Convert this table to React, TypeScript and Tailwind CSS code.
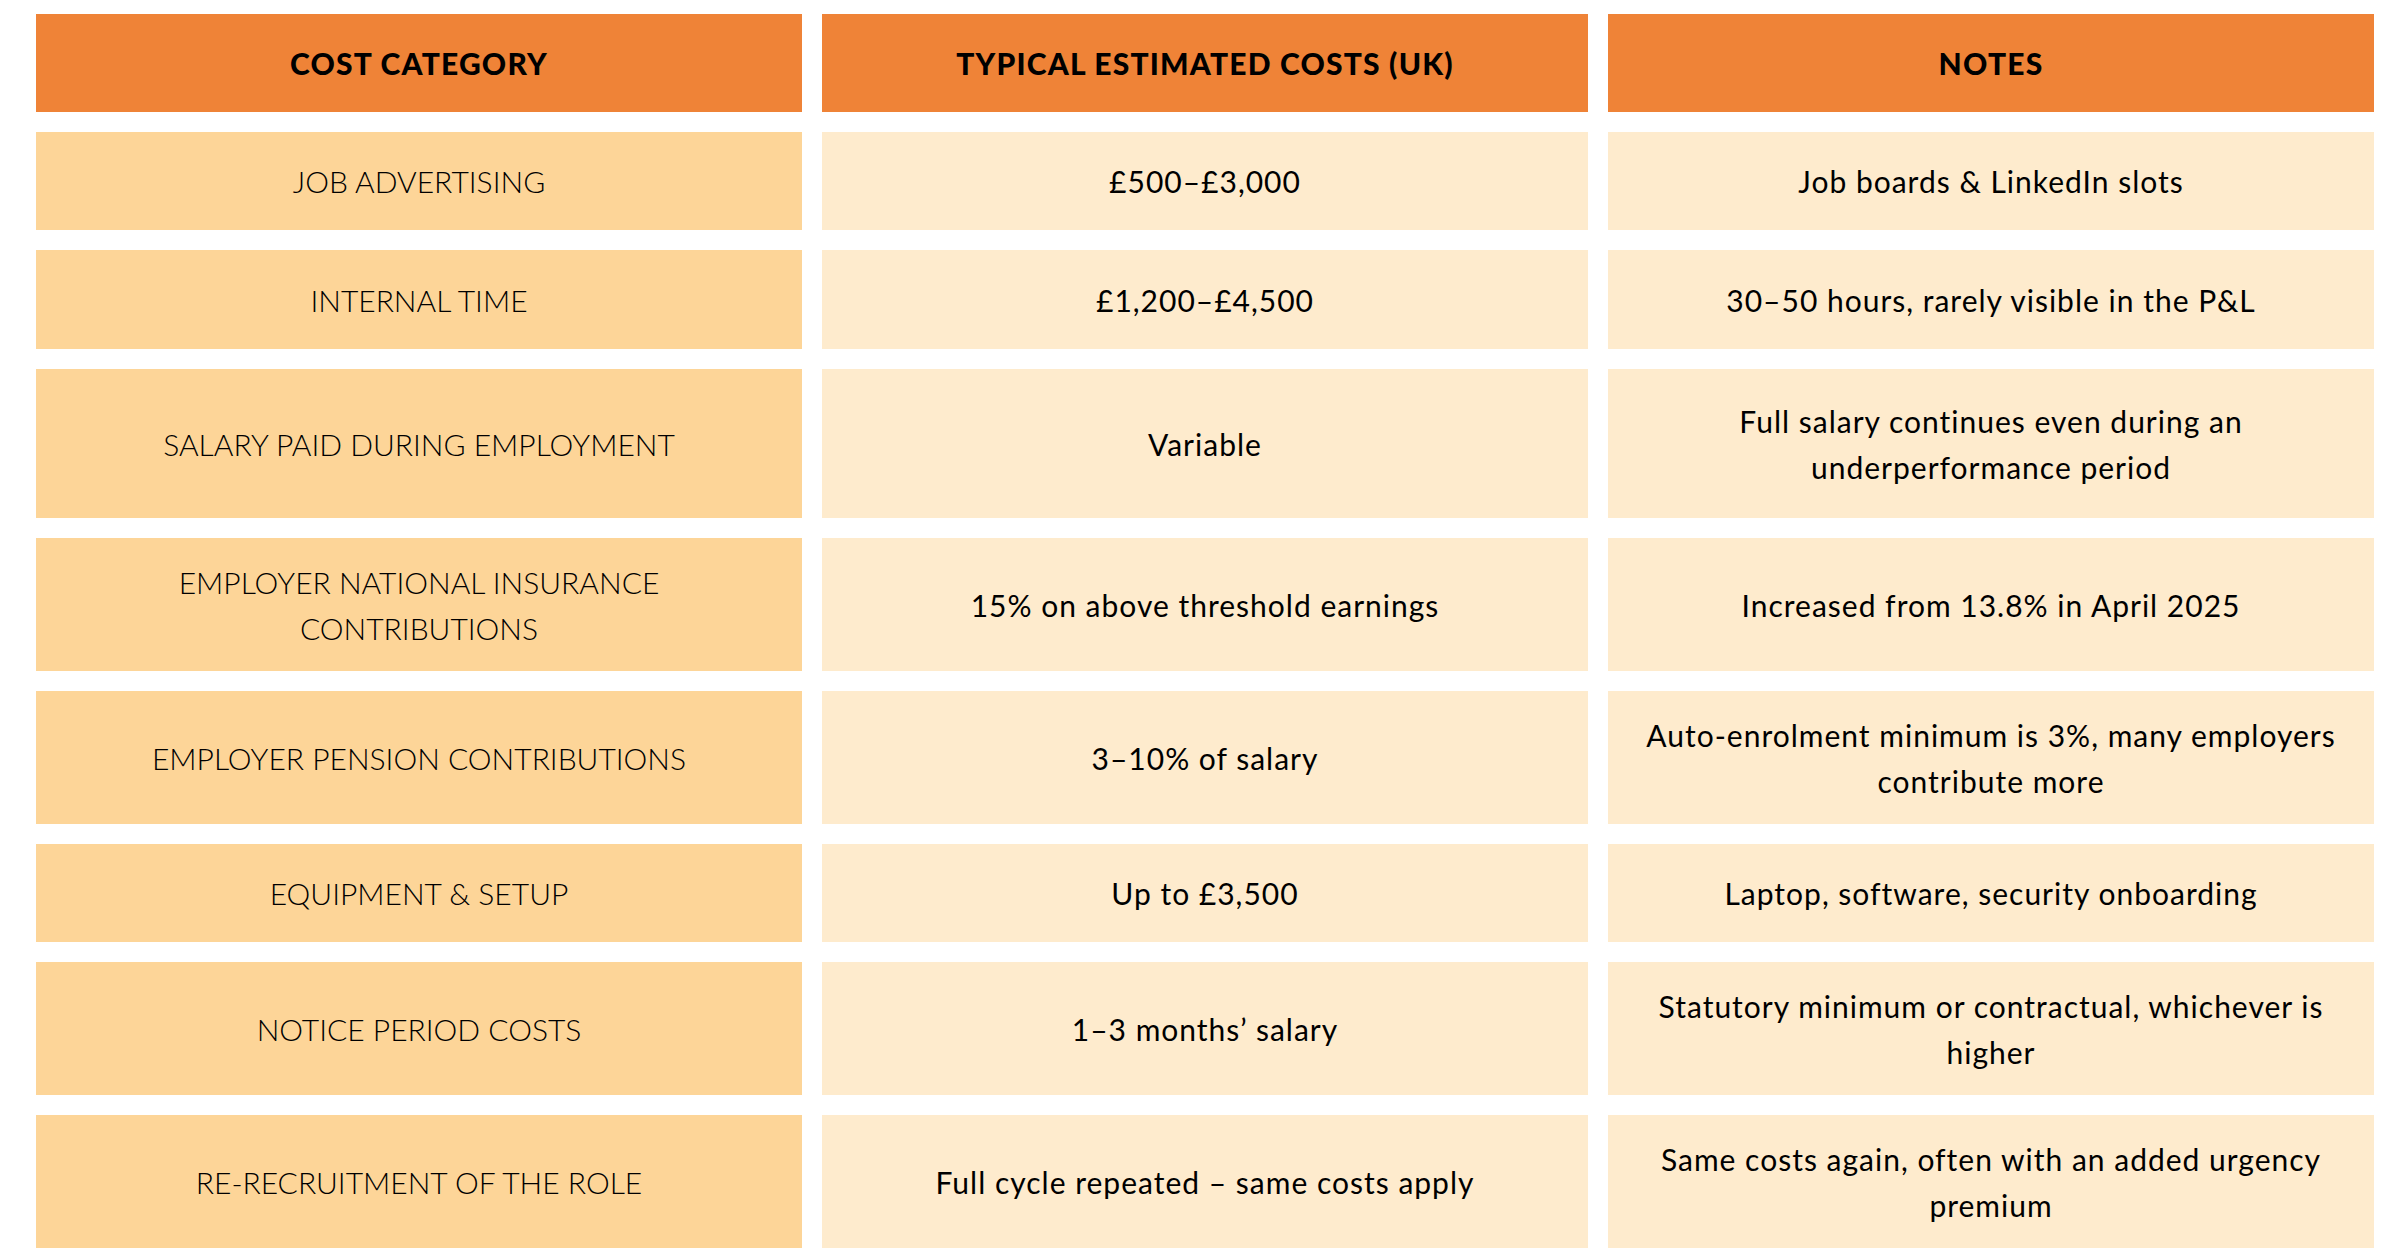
const rows: { category: string[]; cost: string; notes: string[] }[] = [
  { category: ["JOB ADVERTISING"], cost: "£500–£3,000", notes: ["Job boards & LinkedIn slots"] },
  { category: ["INTERNAL TIME"], cost: "£1,200–£4,500", notes: ["30–50 hours, rarely visible in the P&L"] },
  { category: ["SALARY PAID DURING EMPLOYMENT"], cost: "Variable", notes: ["Full salary continues even during an", "underperformance period"] },
  { category: ["EMPLOYER NATIONAL INSURANCE", "CONTRIBUTIONS"], cost: "15% on above threshold earnings", notes: ["Increased from 13.8% in April 2025"] },
  { category: ["EMPLOYER PENSION CONTRIBUTIONS"], cost: "3–10% of salary", notes: ["Auto-enrolment minimum is 3%, many employers", "contribute more"] },
  { category: ["EQUIPMENT & SETUP"], cost: "Up to £3,500", notes: ["Laptop, software, security onboarding"] },
  { category: ["NOTICE PERIOD COSTS"], cost: "1–3 months’ salary", notes: ["Statutory minimum or contractual, whichever is", "higher"] },
  { category: ["RE-RECRUITMENT OF THE ROLE"], cost: "Full cycle repeated – same costs apply", notes: ["Same costs again, often with an added urgency", "premium"] },
];

function Lines({ lines }: { lines: string[] }) {
  return (
    <>
      {lines.map((l, i) => (
        <span key={i} className="block whitespace-nowrap">{l}</span>
      ))}
    </>
  );
}

export default function App() {
  return (
    <div className="w-[2400px] h-[1260px] bg-white pt-[14px] pl-[36px] font-['Lato',sans-serif] text-black">
      <div className="grid grid-cols-[766px_766px_766px] grid-rows-[98px_98px_99px_149px_133px_133px_98px_133px_133px] gap-[20px]">
        {["COST CATEGORY", "TYPICAL ESTIMATED COSTS (UK)", "NOTES"].map((h) => (
          <div key={h} className="bg-[#ef8337] flex items-center justify-center text-[30px] font-black tracking-[1.2px]">
            {h}
          </div>
        ))}
        {rows.map((r) => (
          <>
            <div key={r.category[0]} className="bg-[#fdd598] flex flex-col items-center justify-center text-center text-[30px] leading-[46px] font-light">
              <Lines lines={r.category} />
            </div>
            <div className="bg-[#feebcd] flex items-center justify-center text-center text-[30px] leading-[46px] tracking-[1px]">
              {r.cost}
            </div>
            <div className="bg-[#feebcd] flex flex-col items-center justify-center text-center text-[30px] leading-[46px] tracking-[1px]">
              <Lines lines={r.notes} />
            </div>
          </>
        ))}
      </div>
    </div>
  );
}
